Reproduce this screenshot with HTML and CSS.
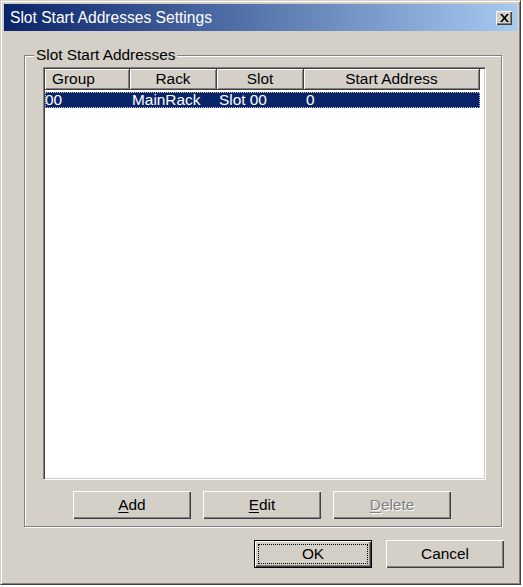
FILE: index.html
```html
<!DOCTYPE html>
<html lang="en">
<head>
<meta charset="utf-8" />
<title>Slot Start Addresses Settings</title>
<link rel="stylesheet" href="styles.css">
</head>
<body>
<div class="window">
  <div class="titlebar">
    <span class="title">Slot Start Addresses Settings</span>
    <button class="close-btn" aria-label="Close">
      <svg width="9" height="8" viewBox="0 0 9 8"><path d="M0 0h2.2l2.3 2.7L6.8 0H9L5.6 4 9 8H6.8L4.5 5.3 2.2 8H0l3.4-4z" fill="#000"/></svg>
    </button>
  </div>
  <div class="client">
    <div class="group">
      <span class="group-label">Slot Start Addresses</span>
      <div class="listview">
        <div class="lv-header">
          <div class="hcell left">Group</div>
          <div class="hcell">Rack</div>
          <div class="hcell">Slot</div>
          <div class="hcell">Start Address</div>
        </div>
        <div class="lv-row selected">
          <div class="cell first">00</div>
          <div class="cell">MainRack</div>
          <div class="cell">Slot 00</div>
          <div class="cell">0</div>
        </div>
      </div>
      <div class="group-buttons">
        <button class="btn"><u>A</u>dd</button>
        <button class="btn"><u>E</u>dit</button>
        <button class="btn" disabled><u>D</u>elete</button>
      </div>
    </div>
    <div class="dialog-buttons">
      <button class="btn default"><span class="focus">OK</span></button>
      <button class="btn">Cancel</button>
    </div>
  </div>
</div>
</body>
</html>
```

FILE: styles.css
```css
:root {
  --face: #d4d0c8;
  --light: #ffffff;
  --shadow: #808080;
  --dark: #404040;
  --navy: #0a246a;
  --sky: #a6caf0;
}
*{box-sizing:border-box;}
body{
  margin:0;
  background:#fff;
  font-family:'Liberation Sans',Arial,sans-serif;
  font-size:15.4px;
  color:#000;
}
.window{
  width:521px;
  height:585px;
  background:var(--face);
  border:1px solid;
  border-color:var(--face) var(--dark) var(--dark) var(--face);
  box-shadow:inset 1px 1px 0 var(--light),inset -1px -1px 0 var(--shadow);
  padding:3px;
  display:flex;
  flex-direction:column;
}
.titlebar{
  height:27px;
  background:linear-gradient(90deg,var(--navy),var(--sky));
  display:flex;
  align-items:center;
  justify-content:space-between;
  padding:1px 5px 0 6px;
}
.title{color:#fff;font-size:15.6px;}
.close-btn{
  width:16px;
  height:14px;
  padding:0;
  background:var(--face);
  border:none;
  box-shadow:inset 1px 1px 0 var(--light),inset -1px -1px 0 var(--dark),inset -2px -2px 0 var(--shadow);
  display:flex;
  align-items:center;
  justify-content:center;
}

/* client area */
.client{
  flex:1;
  padding:24px 15px 0 20px;
  display:flex;
  flex-direction:column;
}
.group{
  position:relative;
  height:472px;
  border:1px solid var(--shadow);
  box-shadow:1px 1px 0 var(--light),inset 1px 1px 0 var(--light);
  padding:11px 15px 0 18px;
}
.group-label{
  position:absolute;
  top:-10px;
  left:9px;
  padding:0 2px;
  background:var(--face);
  line-height:18px;
}

/* list view */
.listview{
  height:413px;
  background:#fff;
  border:1px solid;
  border-color:var(--shadow) var(--light) var(--light) var(--shadow);
  box-shadow:inset 1px 1px 0 var(--dark),inset -1px -1px 0 var(--face);
  padding:1px 2px 2px 1px;
}
.lv-header,.lv-row{
  display:grid;
  grid-template-columns:85px 87px 87px 176px;
}
.hcell{
  height:21px;
  line-height:20px;
  background:var(--face);
  text-align:center;
  box-shadow:inset 1px 1px 0 var(--light),inset -1px -1px 0 var(--shadow),inset -2px -2px 0 var(--face);
  border-right:1px solid var(--dark);
  border-bottom:1px solid var(--dark);
  white-space:nowrap;
  overflow:hidden;
}
.hcell.left{text-align:left;padding-left:7px;}
.lv-row{margin-top:2px;width:435px;}
.lv-row.selected{
  background:var(--navy);
  color:#fff;
  outline:1px dotted #c8c8c8;
  outline-offset:-1px;
}
.cell{
  height:16px;
  line-height:16px;
  padding-left:2px;
  white-space:nowrap;
  overflow:hidden;
}
.cell.first{padding-left:0;}

/* buttons */
.btn{
  width:118px;
  height:28px;
  padding:0;
  font:inherit;
  color:#000;
  background:var(--face);
  border:none;
  box-shadow:inset 1px 1px 0 var(--light),inset -1px -1px 0 var(--dark),inset -2px -2px 0 var(--shadow);
}
.btn u{text-decoration-thickness:1px;text-underline-offset:2px;}
.btn:disabled{color:var(--shadow);text-shadow:1px 1px 0 var(--light);}
.group-buttons{
  display:flex;
  gap:12px;
  padding:11px 0 0 30px;
}
.dialog-buttons{
  display:flex;
  justify-content:flex-end;
  gap:14px;
  padding:13px 0 0;
  margin-right:-2px;
}
.btn.default{
  border:1px solid #000;
  box-shadow:inset 1px 1px 0 var(--light),inset -1px -1px 0 var(--dark),inset -2px -2px 0 var(--shadow);
  padding:3px;
  display:flex;
}
.focus{
  flex:1;
  border:1px dotted #000;
  line-height:18px;
}
```
